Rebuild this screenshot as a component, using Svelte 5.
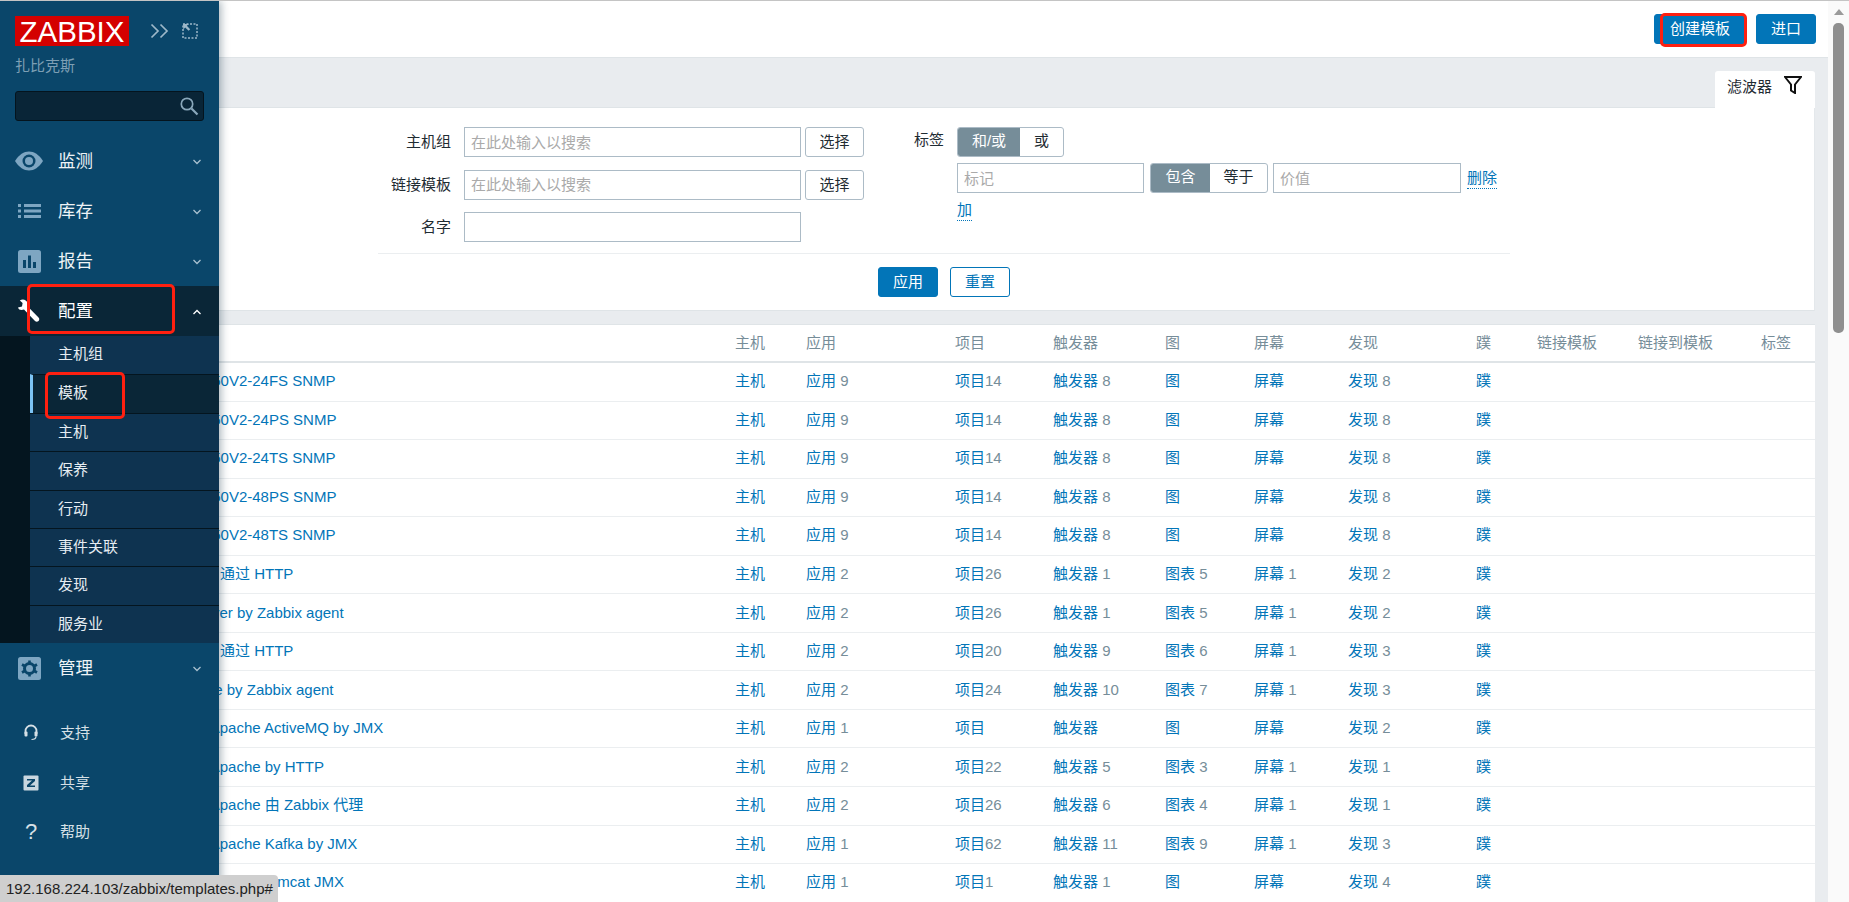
<script>
  const rows = [
    { name: 'Template S5750V2-24FS SNMP', n: 8, app: 9, items: 14, trig: 8, graph: '图', gn: '', scr: '', disc: 8 },
    { name: 'Template S5750V2-24PS SNMP', n: 8, app: 9, items: 14, trig: 8, graph: '图', gn: '', scr: '', disc: 8 },
    { name: 'Template S5750V2-24TS SNMP', n: 8, app: 9, items: 14, trig: 8, graph: '图', gn: '', scr: '', disc: 8 },
    { name: 'Template S5750V2-48PS SNMP', n: 8, app: 9, items: 14, trig: 8, graph: '图', gn: '', scr: '', disc: 8 },
    { name: 'Template S5750V2-48TS SNMP', n: 8, app: 9, items: 14, trig: 8, graph: '图', gn: '', scr: '', disc: 8 },
    { name: 'Template Nginx 通过 HTTP', n: 0, app: 2, items: 26, trig: 1, graph: '图表', gn: 5, scr: 1, disc: 2 },
    { name: 'Template DB Server by Zabbix agent', n: -14, app: 2, items: 26, trig: 1, graph: '图表', gn: 5, scr: 1, disc: 2 },
    { name: 'Template Nginx 通过 HTTP', n: 0, app: 2, items: 20, trig: 9, graph: '图表', gn: 6, scr: 1, disc: 3 },
    { name: 'Template Apache by Zabbix agent', n: -5, app: 2, items: 24, trig: 10, graph: '图表', gn: 7, scr: 1, disc: 3 },
    { name: 'Template App Apache ActiveMQ by JMX', n: 3, app: 1, items: '', trig: '', graph: '图', gn: '', scr: '', disc: 2 },
    { name: 'Template App Apache by HTTP', n: 3, app: 2, items: 22, trig: 5, graph: '图表', gn: 3, scr: 1, disc: 1 },
    { name: 'Template App Apache 由 Zabbix 代理', n: 3, app: 2, items: 26, trig: 6, graph: '图表', gn: 4, scr: 1, disc: 1 },
    { name: 'Template App Apache Kafka by JMX', n: 3, app: 1, items: 62, trig: 11, graph: '图表', gn: 9, scr: 1, disc: 3 },
    { name: 'Template App Apache Tomcat JMX', n: 0, app: 1, items: 1, trig: 1, graph: '图', gn: '', scr: '', disc: 4 }
  ];
  const sub = ['主机组', '模板', '主机', '保养', '行动', '事件关联', '发现', '服务业'];
  const heads = ['主机', '应用', '项目', '触发器', '图', '屏幕', '发现', '蹼', '链接模板', '链接到模板', '标签'];
</script>

<div class="page">
  <div class="content">
    <header class="top">
      <button class="btn primary create">创建模板</button>
      <button class="btn primary import">进口</button>
    </header>

    <section class="gray">
      <div class="tabs">
        <div class="tab">
          <span>滤波器</span>
          <svg width="18" height="18" viewBox="0 0 18 18"><path d="M1 1h16l-6 7.500v8.500l-4-2.500v-6z" fill="none" stroke="#111" stroke-width="2"/></svg>
        </div>
      </div>

      <div class="filter">
        <div class="form">
          <div class="col-left">
            <label for="f1">主机组</label>
            <input id="f1" placeholder="在此处输入以搜索" />
            <button class="btn ghost">选择</button>
            <label for="f2">链接模板</label>
            <input id="f2" placeholder="在此处输入以搜索" />
            <button class="btn ghost">选择</button>
            <label for="f3">名字</label>
            <input id="f3" />
          </div>
          <div class="col-right">
            <span class="tag-label">标签</span>
            <div class="tag-rows">
              <div class="seg seg-a"><span class="on">和/或</span><span>或</span></div>
              <div class="tag-row">
                <input class="tag-in" placeholder="标记" />
                <div class="seg seg-b"><span class="on">包含</span><span>等于</span></div>
                <input class="tag-in val" placeholder="价值" />
                <a class="dotted" href="#del">删除</a>
              </div>
              <a class="dotted add" href="#add">加</a>
            </div>
          </div>
        </div>
        <div class="actions">
          <button class="btn primary apply">应用</button>
          <button class="btn outline">重置</button>
        </div>
      </div>

      <div class="table">
        <div class="row head">
          <div></div>
          {#each heads as h}<div>{h}</div>{/each}
        </div>
        {#each rows as r}
          <div class="row body">
            <div class="name"><a href="#t" style="margin-left:{r.n}px">{r.name}</a></div>
            <div><a href="#h">主机</a></div>
            <div><a href="#a">应用</a> <i>{r.app}</i></div>
            <div><a href="#i">项目</a><i>{r.items}</i></div>
            <div><a href="#r">触发器</a> <i>{r.trig}</i></div>
            <div><a href="#g">{r.graph}</a> <i>{r.gn}</i></div>
            <div><a href="#s">屏幕</a> <i>{r.scr}</i></div>
            <div><a href="#d">发现</a> <i>{r.disc}</i></div>
            <div><a href="#w">蹼</a></div>
            <div></div><div></div><div></div>
          </div>
        {/each}
      </div>
    </section>
  </div>

  <div class="scrollbar">
    <div class="arrow"></div>
    <div class="thumb"></div>
  </div>

  <aside class="side">
    <div class="brand">
      <div class="logo">ZABBIX</div>
      <svg class="ctl" width="20" height="16" viewBox="0 0 20 16"><path d="M1.500 1.500l6.500 6.500-6.500 6.500M10.500 1.500l6.500 6.500-6.500 6.500" fill="none" stroke="#9db8c9" stroke-width="1.700"/></svg>
      <svg class="ctl2" width="16" height="16" viewBox="0 0 16 16"><rect x="1" y="1" width="14" height="14" fill="none" stroke="#9db8c9" stroke-width="1.500" stroke-dasharray="2 1.500"/><path d="M1 1l6 0-2.200 1.800 3.400 3.400-1.600 1.600-3.400-3.400-1.800 2.200z" fill="#9db8c9"/></svg>
    </div>
    <div class="org">扎比克斯</div>
    <div class="search">
      <svg width="20" height="20" viewBox="0 0 20 20"><circle cx="8" cy="8" r="5.700" fill="none" stroke="#8aa8bb" stroke-width="1.700"/><path d="M12.500 12.500l6 6" stroke="#8aa8bb" stroke-width="2.200"/></svg>
    </div>

    <nav class="nav">
      <div class="item">
        <svg width="28" height="20" viewBox="0 0 28 20"><path d="M0 10C4 3.500 9 0.500 14 0.500S24 3.500 28 10c-4 6.500-9 9.500-14 9.500S4 16.500 0 10z" fill="#7ea6c2"/><circle cx="14" cy="10" r="6.500" fill="#0a466a"/><circle cx="14" cy="10" r="4" fill="#7ea6c2"/></svg>
        <span>监测</span>
        <svg class="chev" width="10" height="6" viewBox="0 0 10 6"><path d="M1.500 1l3.500 3.500L8.500 1" fill="none" stroke="#a9c0cf" stroke-width="1.300"/></svg>
      </div>
      <div class="item">
        <svg width="28" height="14" viewBox="0 0 28 14"><g fill="#7ea6c2"><rect x="3" y="0" width="3" height="3"/><rect x="3" y="5.500" width="3" height="3"/><rect x="3" y="11" width="3" height="3"/><rect x="9" y="0" width="17" height="3"/><rect x="9" y="5.500" width="17" height="3"/><rect x="9" y="11" width="17" height="3"/></g></svg>
        <span>库存</span>
        <svg class="chev" width="10" height="6" viewBox="0 0 10 6"><path d="M1.500 1l3.500 3.500L8.500 1" fill="none" stroke="#a9c0cf" stroke-width="1.300"/></svg>
      </div>
      <div class="item">
        <svg width="28" height="23" viewBox="0 0 28 23"><rect x="3" y="0" width="23" height="23" rx="2.500" fill="#7ea6c2"/><g fill="#0a466a"><rect x="8" y="10" width="3" height="8"/><rect x="13" y="5.500" width="3" height="12.500"/><rect x="18" y="12" width="3" height="6"/></g></svg>
        <span>报告</span>
        <svg class="chev" width="10" height="6" viewBox="0 0 10 6"><path d="M1.500 1l3.500 3.500L8.500 1" fill="none" stroke="#a9c0cf" stroke-width="1.300"/></svg>
      </div>
      <div class="item active">
        <svg width="28" height="24" viewBox="0 0 28 24"><path d="M3 8.500l4-1 .6-3.500L4.800 1.500C8-.5 11.500 1 12.500 4c.4 1.200.3 2.300 0 3.200L23.500 18.500c1 1 1 2.500 0 3.500-1 1-2.500 1-3.500 0L9 10.500C6.500 11.500 3.500 11 3 8.500z" fill="#fff"/></svg>
        <span>配置</span>
        <svg class="chev" width="10" height="6" viewBox="0 0 10 6"><path d="M1.500 5L5 1.500 8.500 5" fill="none" stroke="#fff" stroke-width="1.300"/></svg>
      </div>
      <div class="sub">
        {#each sub as s, i}
          <div class="sub-item" class:current={i === 1}>{s}</div>
        {/each}
      </div>
      <div class="item">
        <svg width="28" height="23" viewBox="0 0 28 23"><rect x="3" y="0" width="23" height="23" rx="2.500" fill="#7ea6c2"/><circle cx="14.500" cy="11.500" r="5" fill="none" stroke="#0a466a" stroke-width="3"/><g stroke="#0a466a" stroke-width="2.600"><path d="M14.500 3.500v3M14.500 16.500v3M7 7.500l2.600 1.500M19.400 14l2.600 1.500M7 15.500l2.600-1.500M19.400 9l2.600-1.500"/></g></svg>
        <span>管理</span>
        <svg class="chev" width="10" height="6" viewBox="0 0 10 6"><path d="M1.500 1l3.500 3.500L8.500 1" fill="none" stroke="#a9c0cf" stroke-width="1.300"/></svg>
      </div>
    </nav>

    <div class="links">
      <div class="link">
        <svg width="16" height="17" viewBox="0 0 16 17"><path d="M2.500 10V7a5.500 5.500 0 0 1 11 0v3" fill="none" stroke="#d6e0e6" stroke-width="1.800"/><rect x="1.500" y="7.500" width="3" height="5" rx="1" fill="#d6e0e6"/><rect x="11.500" y="7.500" width="3" height="5" rx="1" fill="#d6e0e6"/><path d="M13 12.500c0 2-2 3-4.500 3" fill="none" stroke="#d6e0e6" stroke-width="1.200"/></svg>
        <span>支持</span>
      </div>
      <div class="link">
        <svg width="16" height="16" viewBox="0 0 16 16"><rect x="0.500" y="0.500" width="15" height="15" rx="1" fill="#c9d7e0"/><path d="M4 4h8v2L7 10.500h5V12H4v-2L9 5.500H4z" fill="#0a466a"/></svg>
        <span>共享</span>
      </div>
      <div class="link">
        <em>?</em>
        <span>帮助</span>
      </div>
      <div class="link">
        <svg width="16" height="16" viewBox="0 0 16 16"><circle cx="8" cy="5" r="4" fill="#d6e0e6"/><path d="M1 16c0-4 3-6 7-6s7 2 7 6z" fill="#d6e0e6"/></svg>
      </div>
    </div>
  </aside>

  <div class="status">192.168.224.103/zabbix/templates.php#</div>

  <div class="mark mark-config"></div>
  <div class="mark mark-tpl"></div>
  <div class="mark mark-create"></div>
</div>

<style>
  :global(body) { margin: 0; }
  .page {
    position: relative;
    display: flex;
    width: 1849px;
    height: 902px;
    overflow: hidden;
    box-sizing: border-box;
    border-top: 1px solid #c4c4c4;
    font: 15px/20px "Liberation Sans", "Noto Sans CJK SC", sans-serif;
    color: #1f2c33;
    background: #fff;
  }
  .content { width: 1828px; flex: none; display: flex; flex-direction: column; }
  .top {
    height: 56px;
    box-sizing: border-box;
    display: flex;
    justify-content: flex-end;
    align-items: flex-start;
    gap: 10px;
    padding: 13px 12px 0 0;
    background: #fff;
    flex: none;
  }
  .btn {
    font: inherit;
    height: 30px;
    box-sizing: border-box;
    border-radius: 3px;
    border: 1px solid transparent;
    padding: 0;
    background: #fff;
  }
  .primary { background: #0275b8; color: #fff; border-color: #0275b8; }
  .create { width: 92px; }
  .import { width: 60px; }
  .ghost { width: 59px; border-color: #acbbc6; color: #1f2c33; }
  .outline { width: 60px; border-color: #0275b8; color: #0275b8; }
  .apply { width: 60px; }

  .gray { flex: 1; background: #e9ecef; border-top: 1px solid #dfe4e7; padding-right: 13px; min-height: 0; }
  .tabs { display: flex; justify-content: flex-end; padding-top: 13px; height: 36px; border-bottom: 1px solid #dfe4e7; }
  .tab {
    width: 100px;
    height: 37px;
    box-sizing: border-box;
    background: #fff;
    border-radius: 3px 3px 0 0;
    display: flex;
    align-items: flex-start;
    padding: 4px 0 0 12px;
    gap: 12px;
  }
  .tab span { line-height: 24px; }
  .tab svg { margin-top: 1px; }
  .filter { background: #fff; height: 202px; border-bottom: 1px solid #dfe4e7; border-right: 1px solid #e4e8eb; }
  .form {
    margin-left: 378px;
    width: 1132px;
    height: 146px;
    box-sizing: border-box;
    padding-top: 19px;
    display: flex;
    border-bottom: 1px solid #ebeef0;
  }
  .col-left {
    display: grid;
    grid-template-columns: 73px 354px 59px;
    grid-auto-rows: 30px;
    row-gap: 12.500px;
    align-items: center;
    width: 486px;
  }
  .col-left label { text-align: right; }
  .col-left input { margin-left: 13px; width: 337px; }
  input {
    font: inherit;
    height: 30px;
    box-sizing: border-box;
    border: 1px solid #acbbc6;
    border-radius: 0;
    padding: 0 6px;
    color: #1f2c33;
    background: #fff;
    outline: none;
  }
  input::placeholder { color: #aaaaaa; opacity: 1; }
  .col-right { display: flex; margin-left: 50px; }
  .tag-label { width: 30px; line-height: 26px; }
  .tag-rows { margin-left: 13px; display: flex; flex-direction: column; align-items: flex-start; }
  .seg {
    display: flex;
    height: 30px;
    box-sizing: border-box;
    border: 1px solid #acbbc6;
    border-radius: 3px;
    overflow: hidden;
    line-height: 26px;
  }
  .seg span { display: block; text-align: center; }
  .seg .on { background: #768d99; color: #fff; }
  .seg-a span:first-child { width: 62px; }
  .seg-a span:last-child { width: 43px; }
  .seg-b span:first-child { width: 59px; }
  .seg-b span:last-child { width: 57px; }
  .tag-row { display: flex; align-items: flex-start; margin-top: 6px; }
  .tag-in { width: 187px; }
  .seg-b { margin-left: 6px; }
  .val { margin-left: 5px; width: 188px; }
  a { color: #0275b8; text-decoration: none; }
  .dotted { border-bottom: 1px dotted #0275b8; line-height: 20px; }
  .tag-row .dotted { margin: 5px 0 0 6px; }
  .add { margin-top: 7px; }
  .actions { display: flex; gap: 12px; margin: 13px 0 0 878px; }

  .table { margin-top: 13px; border-top: 1px solid #dfe4e7; background: #fff; }
  .row {
    display: grid;
    grid-template-columns: 735px 71px 149px 98px 112px 89px 94px 128px 61px 101px 123px 54px;
    height: 38.550px;
    box-sizing: border-box;
    align-items: center;
    border-bottom: 1px solid #ebeef0;
    white-space: nowrap;
  }
  .row.body { padding-bottom: 1px; }
  .row.head { height: 38px; border-bottom: 2px solid #dfe4e7; color: #768d99; }
  .name { padding-left: 112.500px; overflow: hidden; }
  .row i { font-style: normal; color: #768d99; }

  .scrollbar { flex: 1; background: #fafafa; position: relative; display: flex; flex-direction: column; align-items: center; }
  .arrow { margin-top: 8px; width: 0; height: 0; border: 5.500px solid transparent; border-top: 0; border-bottom: 6px solid #9a9a9a; }
  .thumb { margin-top: 8px; width: 11px; height: 310px; background: #8f8f8f; border-radius: 5px; }

  .side {
    position: absolute;
    left: 0;
    top: 0;
    width: 219px;
    bottom: 0;
    background: #0a466a;
    box-shadow: 2px 0 8px rgba(10, 40, 60, .35);
    color: #fff;
    display: flex;
    flex-direction: column;
  }
  .side > * { flex: none; }
  .brand { display: flex; align-items: center; padding: 15px 0 0 15px; height: 30px; }
  .logo {
    width: 114px;
    height: 30px;
    background: #d40000;
    color: #fff;
    font: 29.500px/31px "Liberation Sans", sans-serif;
    text-align: center;
    flex: none;
  }
  .ctl { margin-left: 21px; }
  .ctl2 { margin-left: 12px; }
  .org { margin: 12px 0 0 15px; color: #7d9fb4; line-height: 16px; height: 16px; }
  .search {
    margin: 17px 0 0 15px;
    width: 189px;
    height: 30px;
    box-sizing: border-box;
    background: #092537;
    border: 1px solid #04141e;
    border-radius: 3px;
    display: flex;
    justify-content: flex-end;
    align-items: center;
    padding-right: 4px;
  }
  .nav { margin-top: 15px; }
  .item {
    height: 50px;
    display: flex;
    align-items: center;
    padding-left: 15px;
    font-size: 17.500px;
    position: relative;
    color: #eef3f6;
  }
  .item > span { position: absolute; left: 58px; }
  .chev { position: absolute; left: 192px; top: 23px; }
  .item.active { background: #0a2637; color: #fff; height: 50px; }
  .sub { background: #04151f; padding-left: 30px; }
  .sub-item {
    height: 38.400px;
    box-sizing: border-box;
    background: #0e3350;
    border-top: 1px solid #04151f;
    padding: 0 0 0 28px;
    line-height: 36px;
    color: #e6edf2;
  }
  .sub-item:first-child { border-top: 0; }
  .sub-item.current { background: #0a2637; border-left: 3px solid #7cc4f5; padding-left: 25px; }
  .links { margin-top: 15px; }
  .link { height: 49.700px; display: flex; align-items: center; padding-left: 23px; color: #d6e0e6; position: relative; }
  .link > span { position: absolute; left: 60px; }
  .link em { font: 400 22px/22px "Liberation Sans", sans-serif; width: 16px; text-align: center; color: #d6e0e6; }

  .status {
    position: absolute;
    left: 0;
    bottom: 0;
    width: 278px;
    height: 27px;
    box-sizing: border-box;
    background: #cfcfcf;
    border-radius: 0 4px 0 0;
    padding-left: 6px;
    color: #222;
    font: 15px/27px "Liberation Sans", sans-serif;
    white-space: nowrap;
  }
  .mark { position: absolute; box-sizing: border-box; border: 3px solid #ff2010; border-radius: 5px; pointer-events: none; }
  .mark-config { left: 27px; top: 283px; width: 148px; height: 50px; }
  .mark-tpl { left: 45px; top: 371px; width: 80px; height: 47px; }
  .mark-create { left: 1660px; top: 12px; width: 87px; height: 34px; }
</style>
